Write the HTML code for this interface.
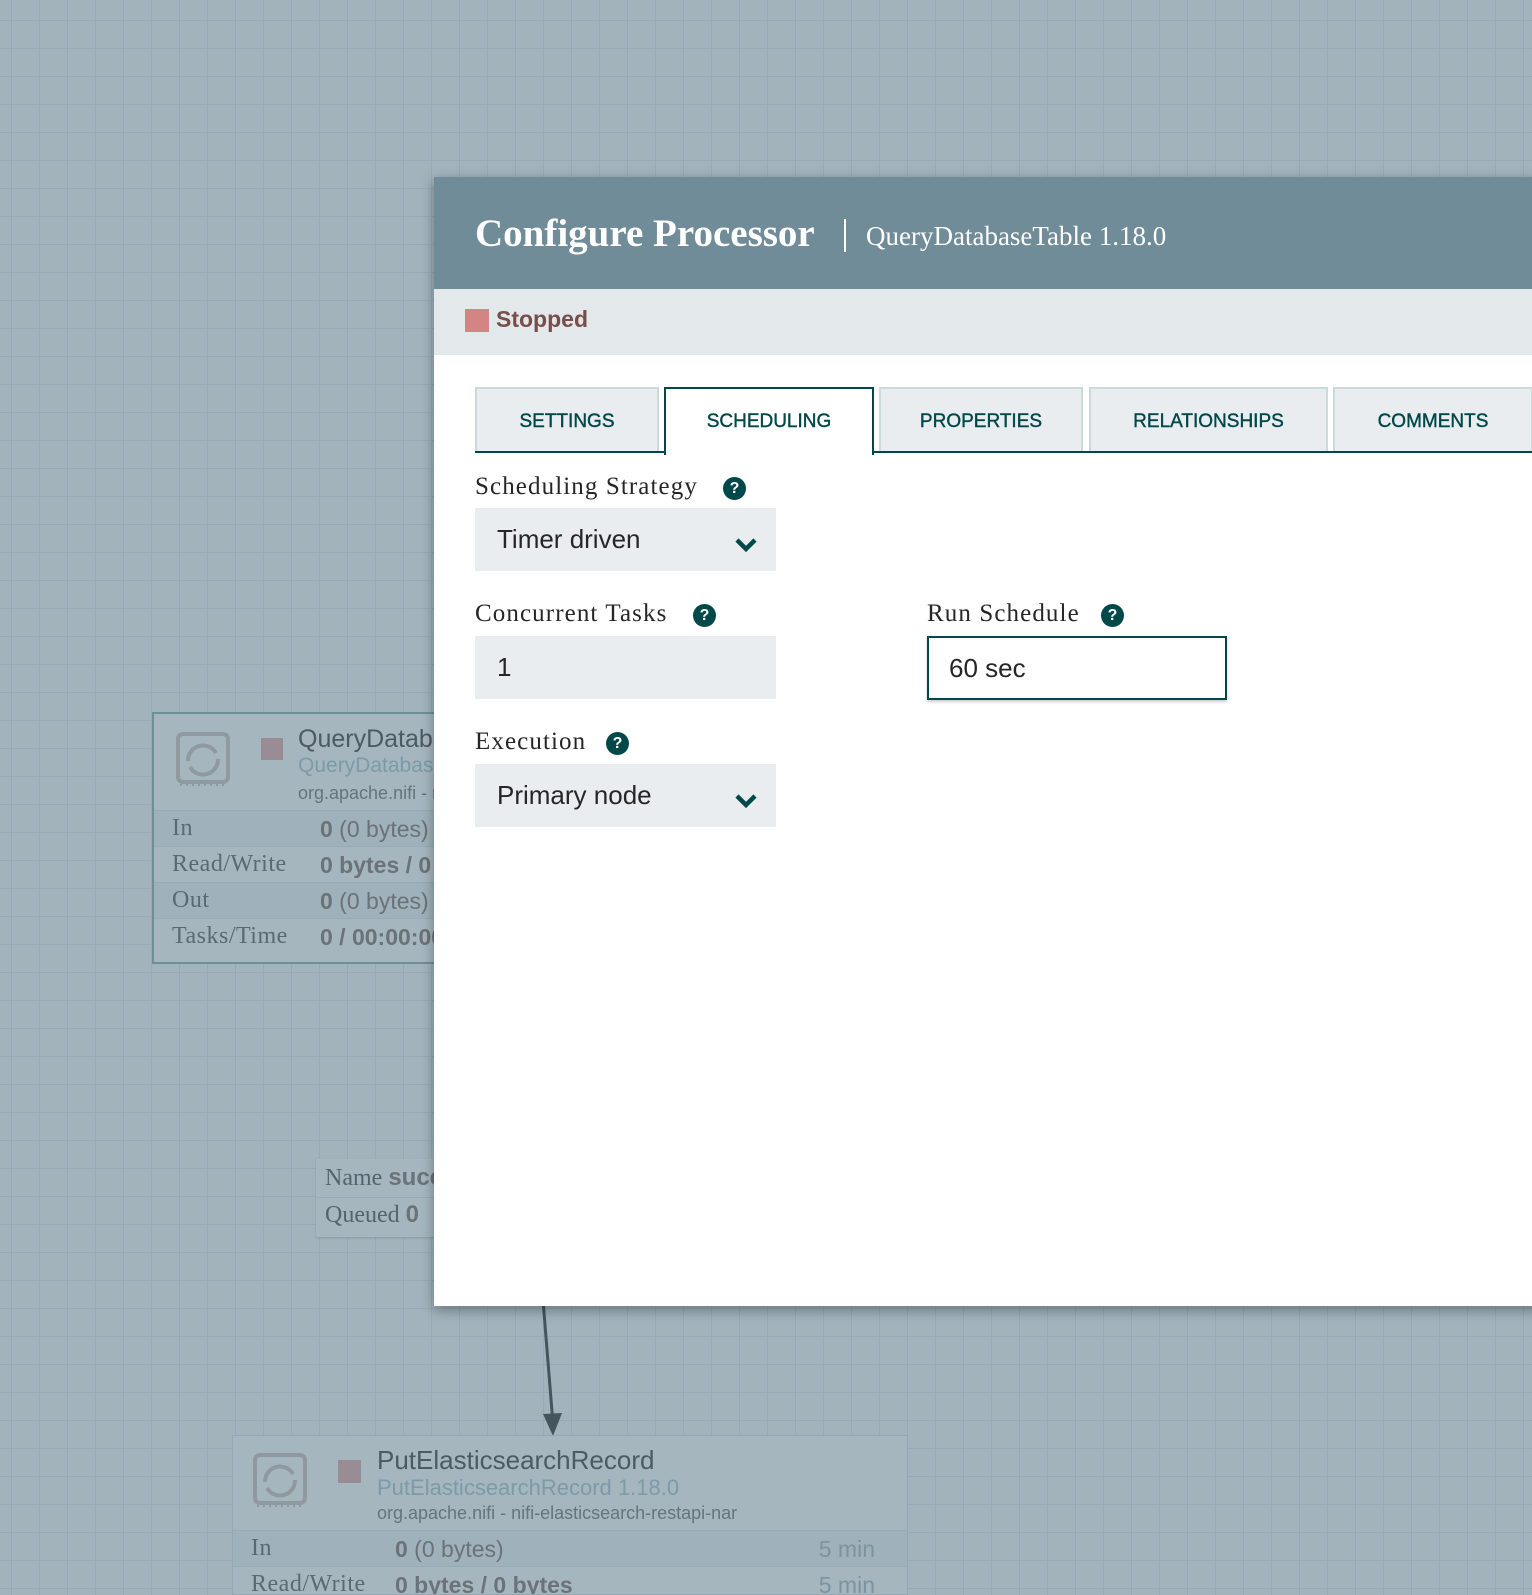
<!DOCTYPE html>
<html><head><meta charset="utf-8"><style>
*{box-sizing:border-box;margin:0;padding:0}
body{width:1532px;height:1586px;overflow:hidden;position:relative;background-color:#a2b3bc;
background-image:linear-gradient(#97a9b2 0 1px,transparent 1px),linear-gradient(90deg,#97a9b2 0 1px,transparent 1px);
background-size:28px 28px;background-position:11px 20px;font-family:"Liberation Sans",sans-serif}
.abs{position:absolute;white-space:nowrap}
.serif{font-family:"Liberation Serif",serif}
.node{position:absolute;background:#a5b6bf;overflow:hidden}
.row{position:absolute;left:0;right:0;height:36px;border-top:1px solid #98aab3;font-size:23px;color:#5a6a72;white-space:nowrap}
.row .l{position:absolute;left:18px;top:4px;font-family:"Liberation Serif",serif;font-size:24px;letter-spacing:.5px}
.row .v{position:absolute;top:5px;color:#6b7378}
.dlg{position:absolute;left:434px;top:177px;width:1110px;height:1129px;background:#fff;box-shadow:0 4px 12px rgba(0,0,0,.35)}
.tab{position:absolute;top:210px;height:66px;background:#e9edf0;border:2px solid #ccdadb;border-bottom:none;color:#004849;font-size:19px;text-align:center;line-height:66px}
.tab span{font-weight:normal;-webkit-text-stroke:.4px #004849}
.lbl{position:absolute;font-family:"Liberation Serif",serif;font-size:25px;letter-spacing:1.1px;color:#262626;white-space:nowrap}
.help{position:absolute;width:23px;height:23px;border-radius:50%;background:#004849;color:#fff;font-size:16px;font-weight:bold;text-align:center;line-height:23px}
.sel{position:absolute;background:#e9edf0;font-size:26px;color:#262626;padding-left:22px;line-height:63px;height:63px;width:301px}
.chev{position:absolute;right:18px;top:29px}
</style></head><body>

<!-- node 1 -->
<div class="node" style="left:152px;top:712px;width:300px;height:252px;border:2px solid #6d8f96;">
  <svg class="abs" style="left:20px;top:17px" width="58" height="58" viewBox="0 0 58 58"><rect x="4" y="3" width="50" height="48" rx="5" fill="none" stroke="#8e9aa0" stroke-width="4"/><path d="M6 54 l46 0" stroke="#8e9aa0" stroke-width="2" stroke-dasharray="2 4"/><path d="M14 30 a15 15 0 0 1 28 -8" fill="none" stroke="#8e9aa0" stroke-width="4"/><path d="M44 28 a15 15 0 0 1 -28 8" fill="none" stroke="#8e9aa0" stroke-width="4"/></svg>
  <div class="abs" style="left:107px;top:24px;width:22px;height:22px;background:#9a8c94"></div>
  <div class="abs" style="left:144px;top:11px;font-size:25px;color:#4c5a62">QueryDatabaseTable</div>
  <div class="abs" style="left:144px;top:40px;font-size:21px;color:#7b9ba7">QueryDatabaseTable</div>
  <div class="abs" style="left:144px;top:69px;font-size:18px;color:#66747b">org.apache.nifi - nifi</div>
  <div class="row" style="top:96px;background:#9fb1ba"><span class="l">In</span><span class="v" style="left:166px"><b>0</b> (0 bytes)</span></div>
  <div class="row" style="top:132px"><span class="l">Read/Write</span><span class="v" style="left:166px"><b>0 bytes / 0 bytes</b></span></div>
  <div class="row" style="top:168px;background:#9fb1ba"><span class="l">Out</span><span class="v" style="left:166px"><b>0</b> (0 bytes)</span></div>
  <div class="row" style="top:204px"><span class="l">Tasks/Time</span><span class="v" style="left:166px"><b>0 / 00:00:00</b></span></div>
</div>

<!-- name box -->
<div class="abs" style="left:316px;top:1159px;width:150px;height:78px;background:#a5b6bf;box-shadow:0 1px 2px rgba(0,0,0,.15)">
  <div class="abs serif" style="left:9px;top:5px;font-size:24px;color:#55646c">Name <b style="font-family:'Liberation Sans';color:#6b7378">success</b></div>
  <div class="abs" style="left:0;right:0;top:38px;border-top:1px solid #98aab3"></div>
  <div class="abs serif" style="left:9px;top:42px;font-size:24px;color:#55646c">Queued <b style="font-family:'Liberation Sans';color:#6b7378">0</b></div>
</div>

<!-- arrow -->
<svg class="abs" style="left:0;top:0" width="1532" height="1586"><line x1="543" y1="1300" x2="553" y2="1424" stroke="#44555d" stroke-width="3"/><path d="M543 1414 L553 1436 L562 1413 Z" fill="#44555d"/></svg>

<!-- node 2 -->
<div class="node" style="left:232px;top:1435px;width:676px;height:160px;border:1px solid #95a7b0;">
  <svg class="abs" style="left:18px;top:16px" width="58" height="58" viewBox="0 0 58 58"><rect x="4" y="3" width="50" height="48" rx="5" fill="none" stroke="#8e9aa0" stroke-width="4"/><path d="M6 54 l46 0" stroke="#8e9aa0" stroke-width="2" stroke-dasharray="2 4"/><path d="M14 30 a15 15 0 0 1 28 -8" fill="none" stroke="#8e9aa0" stroke-width="4"/><path d="M44 28 a15 15 0 0 1 -28 8" fill="none" stroke="#8e9aa0" stroke-width="4"/></svg>
  <div class="abs" style="left:105px;top:24px;width:23px;height:23px;background:#9a8c94"></div>
  <div class="abs" style="left:144px;top:9px;font-size:26px;color:#4c5a62">PutElasticsearchRecord</div>
  <div class="abs" style="left:144px;top:39px;font-size:22px;color:#7b9ba7">PutElasticsearchRecord 1.18.0</div>
  <div class="abs" style="left:144px;top:67px;font-size:18px;color:#66747b">org.apache.nifi - nifi-elasticsearch-restapi-nar</div>
  <div class="row" style="top:94px;background:#9fb1ba"><span class="l">In</span><span class="v" style="left:162px"><b>0</b> (0 bytes)</span><span class="v" style="right:32px;color:#7c949f">5 min</span></div>
  <div class="row" style="top:130px"><span class="l">Read/Write</span><span class="v" style="left:162px"><b>0 bytes / 0 bytes</b></span><span class="v" style="right:32px;color:#7c949f">5 min</span></div>
</div>

<!-- dialog -->
<div class="dlg">
  <div class="abs" style="left:0;top:0;right:0;height:112px;background:#708c98"></div>
  <div class="abs serif" style="left:41px;top:34px;font-size:39px;font-weight:bold;color:#fff">Configure Processor</div>
  <div class="abs" style="left:410px;top:42px;width:2px;height:33px;background:#fff"></div>
  <div class="abs serif" style="left:432px;top:44px;font-size:27px;color:#fff">QueryDatabaseTable 1.18.0</div>
  <div class="abs" style="left:0;top:112px;right:0;height:66px;background:#e3e8eb"></div>
  <div class="abs" style="left:31px;top:132px;width:24px;height:23px;background:#d38584"></div>
  <div class="abs" style="left:62px;top:129px;font-size:23px;font-weight:bold;color:#774e4c">Stopped</div>

  <div class="tab" style="left:41px;width:184px"><span>SETTINGS</span></div>
  <div class="tab" style="left:230px;width:210px;background:#fff;border-color:#004849;height:68px"><span>SCHEDULING</span></div>
  <div class="tab" style="left:445px;width:204px"><span>PROPERTIES</span></div>
  <div class="tab" style="left:655px;width:239px"><span>RELATIONSHIPS</span></div>
  <div class="tab" style="left:899px;width:200px"><span>COMMENTS</span></div>
  <div class="abs" style="left:41px;width:191px;top:274px;height:2px;background:#004849"></div>
  <div class="abs" style="left:438px;right:0;top:274px;height:2px;background:#004849"></div>

  <div class="lbl" style="left:41px;top:296px">Scheduling Strategy</div>
  <div class="help" style="left:289px;top:300px">?</div>
  <div class="sel" style="left:41px;top:331px">Timer driven<svg class="chev" width="24" height="16" viewBox="0 0 24 16"><path d="M3 3 L12 12 L21 3" fill="none" stroke="#004849" stroke-width="4.5"/></svg></div>

  <div class="lbl" style="left:41px;top:423px">Concurrent Tasks</div>
  <div class="help" style="left:259px;top:427px">?</div>
  <div class="sel" style="left:41px;top:459px">1</div>

  <div class="lbl" style="left:493px;top:423px">Run Schedule</div>
  <div class="help" style="left:667px;top:427px">?</div>
  <div class="sel" style="left:493px;top:459px;width:300px;height:64px;background:#fff;border:2px solid #004849;line-height:60px;padding-left:20px;box-shadow:0 2px 3px rgba(0,0,0,.2)">60 sec</div>

  <div class="lbl" style="left:41px;top:551px">Execution</div>
  <div class="help" style="left:172px;top:555px">?</div>
  <div class="sel" style="left:41px;top:587px">Primary node<svg class="chev" width="24" height="16" viewBox="0 0 24 16"><path d="M3 3 L12 12 L21 3" fill="none" stroke="#004849" stroke-width="4.5"/></svg></div>
</div>
</body></html>
